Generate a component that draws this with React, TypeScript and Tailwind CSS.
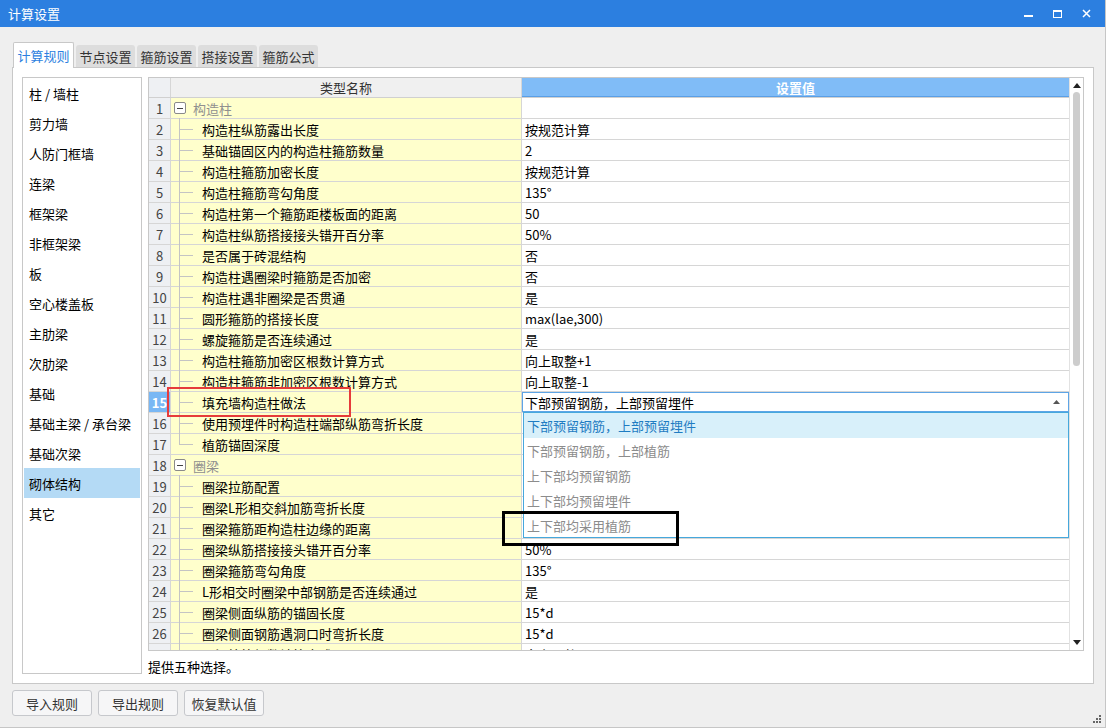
import React from 'react';

const FONT = { fontFamily: "'Noto Sans CJK SC', 'Noto Sans', sans-serif" };

const sideItems = [
    '柱 / 墙柱', '剪力墙', '人防门框墙', '连梁', '框架梁', '非框架梁', '板', '空心楼盖板',
    '主肋梁', '次肋梁', '基础', '基础主梁 / 承台梁', '基础次梁', '砌体结构', '其它',
];

type Row = { name: string; value: string; group?: boolean; last?: boolean };

const rows: Row[] = [
    { name: '构造柱', value: '', group: true },
    { name: '构造柱纵筋露出长度', value: '按规范计算' },
    { name: '基础锚固区内的构造柱箍筋数量', value: '2' },
    { name: '构造柱箍筋加密长度', value: '按规范计算' },
    { name: '构造柱箍筋弯勾角度', value: '135°' },
    { name: '构造柱第一个箍筋距楼板面的距离', value: '50' },
    { name: '构造柱纵筋搭接接头错开百分率', value: '50%' },
    { name: '是否属于砖混结构', value: '否' },
    { name: '构造柱遇圈梁时箍筋是否加密', value: '否' },
    { name: '构造柱遇非圈梁是否贯通', value: '是' },
    { name: '圆形箍筋的搭接长度', value: 'max(lae,300)' },
    { name: '螺旋箍筋是否连续通过', value: '是' },
    { name: '构造柱箍筋加密区根数计算方式', value: '向上取整+1' },
    { name: '构造柱箍筋非加密区根数计算方式', value: '向上取整-1' },
    { name: '填充墙构造柱做法', value: '下部预留钢筋，上部预留埋件' },
    { name: '使用预埋件时构造柱端部纵筋弯折长度', value: '' },
    { name: '植筋锚固深度', value: '', last: true },
    { name: '圈梁', value: '', group: true },
    { name: '圈梁拉筋配置', value: '' },
    { name: '圈梁L形相交斜加筋弯折长度', value: '' },
    { name: '圈梁箍筋距构造柱边缘的距离', value: '' },
    { name: '圈梁纵筋搭接接头错开百分率', value: '50%' },
    { name: '圈梁箍筋弯勾角度', value: '135°' },
    { name: 'L形相交时圈梁中部钢筋是否连续通过', value: '是' },
    { name: '圈梁侧面纵筋的锚固长度', value: '15*d' },
    { name: '圈梁侧面钢筋遇洞口时弯折长度', value: '15*d' },
    { name: '圈梁拉筋根数计算方式', value: '向上取整+1' },
];

const options = [
    '下部预留钢筋，上部预留埋件',
    '下部预留钢筋，上部植筋',
    '上下部均预留钢筋',
    '上下部均预留埋件',
    '上下部均采用植筋',
];

const tabs = ['计算规则', '节点设置', '箍筋设置', '搭接设置', '箍筋公式'];

const NameCell = ({ row }: { row: Row }) => {
    if (row.group) {
        return (
            <div className="w-[351px] h-full flex items-center bg-[#ffffcc] border-r border-[#d6d6d6] pl-[3px]">
                <div className="w-[12px] h-[12px] border border-[#8a8a8a] rounded-[2px] flex items-center justify-center bg-white">
                    <div className="w-[6px] h-px bg-[#444]" />
                </div>
                <span className="ml-[7px] text-[#8f8f8f]">{row.name}</span>
            </div>
        );
    }
    return (
        <div className="w-[351px] h-full flex items-center bg-[#ffffcc] border-r border-[#d6d6d6]">
            <div className="w-[8px]" />
            {row.last ? (
                <div className="w-[14px] h-[11px] self-start border-l border-b border-[#c4c4c4]" />
            ) : (
                <div className="w-[14px] self-stretch -my-px border-l border-[#c4c4c4] flex items-center">
                    <div className="w-full h-px bg-[#c4c4c4]" />
                </div>
            )}
            <span className="ml-[9px] text-black">{row.name}</span>
        </div>
    );
};

export default function App() {
    return (
        <div
            className="relative w-[1106px] h-[728px] bg-[#efefef] border-r border-b border-[#c6c6c6] flex flex-col overflow-hidden text-[13px] leading-none"
            style={FONT}
        >
            {/* title bar */}
            <div className="h-[27px] bg-[#2c7fe0] flex items-center pl-[8px] text-white shrink-0">
                <span>计算设置</span>
                <div className="ml-auto flex items-center h-full">
                    <div className="w-[29px] h-full flex items-center justify-center">
                        <div className="w-[9px] h-[2px] bg-white mt-[5px]" />
                    </div>
                    <div className="w-[29px] h-full flex items-center justify-center">
                        <div className="w-[9px] h-[8px] border border-white border-t-2" />
                    </div>
                    <div className="w-[29px] h-full flex items-center justify-center mr-[4px]">
                        <svg width="9" height="9" viewBox="0 0 9 9">
                            <path d="M1 1L8 8M8 1L1 8" stroke="white" strokeWidth="1.5" />
                        </svg>
                    </div>
                </div>
            </div>

            {/* tabs */}
            <div className="flex items-end gap-[2px] pl-[13px] pt-[15px] h-[40px] shrink-0">
                {tabs.map((t, i) =>
                    i === 0 ? (
                        <div
                            key={t}
                            className="relative z-10 -mb-px w-[61px] h-[26px] bg-white border border-b-0 border-[#c8c8c8] rounded-t-[2px] flex items-center justify-center text-[#2c7fe0]"
                        >
                            {t}
                        </div>
                    ) : (
                        <div
                            key={t}
                            className="w-[59px] h-[22px] bg-[#dddddd] rounded-t-[3px] flex items-center justify-center text-[#333]"
                        >
                            {t}
                        </div>
                    )
                )}
            </div>

            {/* panel */}
            <div className="ml-[12px] w-[1082px] h-[617px] bg-white border border-[#c8c8c8] flex gap-[6px] pt-[9px] pl-[9px] shrink-0">
                {/* side list */}
                <div className="w-[120px] h-[597px] border border-[#c8c8c8] px-px flex flex-col">
                    {sideItems.map((s, i) => (
                        <div
                            key={s}
                            className={`h-[30px] shrink-0 flex items-center pl-[5px] ${i === 13 ? 'bg-[#b4daf5]' : ''} text-black`}
                        >
                            {s}
                        </div>
                    ))}
                </div>

                <div className="flex flex-col w-[936px]">
                    {/* grid */}
                    <div className="h-[574px] border border-[#c8c8c8] flex">
                        <div className="w-[920px] flex flex-col overflow-hidden">
                            <div className="h-[20px] flex shrink-0 border-b border-[#d0d0d0]">
                                <div className="w-[22px] bg-[#eef0f3] border-r border-[#d6d6d6]" />
                                <div className="w-[351px] bg-[#f0f0f0] border-r border-[#d6d6d6] flex items-center justify-center text-[#333]">
                                    类型名称
                                </div>
                                <div className="w-[547px] bg-[#80bcf7] border-b border-[#5a9fe6] flex items-center justify-center text-white font-bold">
                                    设置值
                                </div>
                            </div>
                            {rows.map((r, i) => {
                                const sel = i === 14;
                                return (
                                    <div key={i} className="h-[21px] flex shrink-0 border-b border-[#d6d6d6]">
                                        <div
                                            className={`w-[22px] h-full flex items-center justify-center border-r border-[#d6d6d6] ${
                                                sel ? 'bg-[#79b7f4] text-white font-bold' : 'bg-[#eef0f3] text-[#444]'
                                            }`}
                                        >
                                            {i + 1}
                                        </div>
                                        <NameCell row={r} />
                                        {sel ? (
                                            <div className="w-[547px] h-full bg-white border border-[#5ea5e6] flex items-center pl-[2px] text-black">
                                                <span>{r.value}</span>
                                                <svg className="ml-auto mr-[8px]" width="7" height="4" viewBox="0 0 7 4">
                                                    <path d="M0 4L3.5 0L7 4Z" fill="#555" />
                                                </svg>
                                            </div>
                                        ) : (
                                            <div className="w-[547px] h-full bg-white flex items-center pl-[3px] text-black">
                                                {r.value}
                                            </div>
                                        )}
                                    </div>
                                );
                            })}
                        </div>
                        {/* vertical scrollbar */}
                        <div className="w-[14px] flex flex-col items-center bg-white border-l border-[#e2e2e2]">
                            <svg className="mt-[5px]" width="8" height="5" viewBox="0 0 8 5">
                                <path d="M0 5L4 0L8 5Z" fill="#222" />
                            </svg>
                            <div className="mt-[4px] w-[7px] h-[274px] rounded-[4px] bg-[#cdcdcd]" />
                            <div className="flex-1" />
                            <svg className="mb-[5px]" width="8" height="5" viewBox="0 0 8 5">
                                <path d="M0 0L8 0L4 5Z" fill="#222" />
                            </svg>
                        </div>
                    </div>
                    <div className="pt-[9px] text-black">提供五种选择。</div>
                </div>
            </div>

            {/* buttons */}
            <div className="flex gap-[6px] ml-[12px] mt-[6px]">
                {['导入规则', '导出规则', '恢复默认值'].map((b) => (
                    <div
                        key={b}
                        className="w-[80px] h-[26px] rounded-[3px] border border-[#c6c8cc] bg-[#f6f6f7] flex items-center justify-center text-[#333]"
                    >
                        {b}
                    </div>
                ))}
            </div>

            {/* resize grip */}
            <svg className="absolute right-[3px] bottom-[3px]" width="9" height="9" viewBox="0 0 9 9">
                <rect x="6" y="0" width="2" height="2" fill="#666" />
                <rect x="3" y="3" width="2" height="2" fill="#666" />
                <rect x="6" y="3" width="2" height="2" fill="#666" />
                <rect x="0" y="6" width="2" height="2" fill="#666" />
                <rect x="3" y="6" width="2" height="2" fill="#666" />
                <rect x="6" y="6" width="2" height="2" fill="#666" />
            </svg>

            {/* dropdown list */}
            <div className="absolute left-[523px] top-[412px] w-[546px] h-[126px] bg-white border border-[#46a8dc] flex flex-col">
                {options.map((o, i) => (
                    <div
                        key={o}
                        className={`h-[25px] shrink-0 flex items-center pl-[3px] ${
                            i === 0 ? 'bg-[#d8f0fa] text-[#1f7cc2]' : 'text-[#8c8c8c]'
                        }`}
                    >
                        {o}
                    </div>
                ))}
            </div>

            {/* annotations */}
            <div className="absolute left-[167px] top-[387px] w-[184px] h-[30px] border-2 border-[#e63b3b]" />
            <div className="absolute left-[502px] top-[511px] w-[177px] h-[35px] border-[3px] border-black" />
        </div>
    );
}
